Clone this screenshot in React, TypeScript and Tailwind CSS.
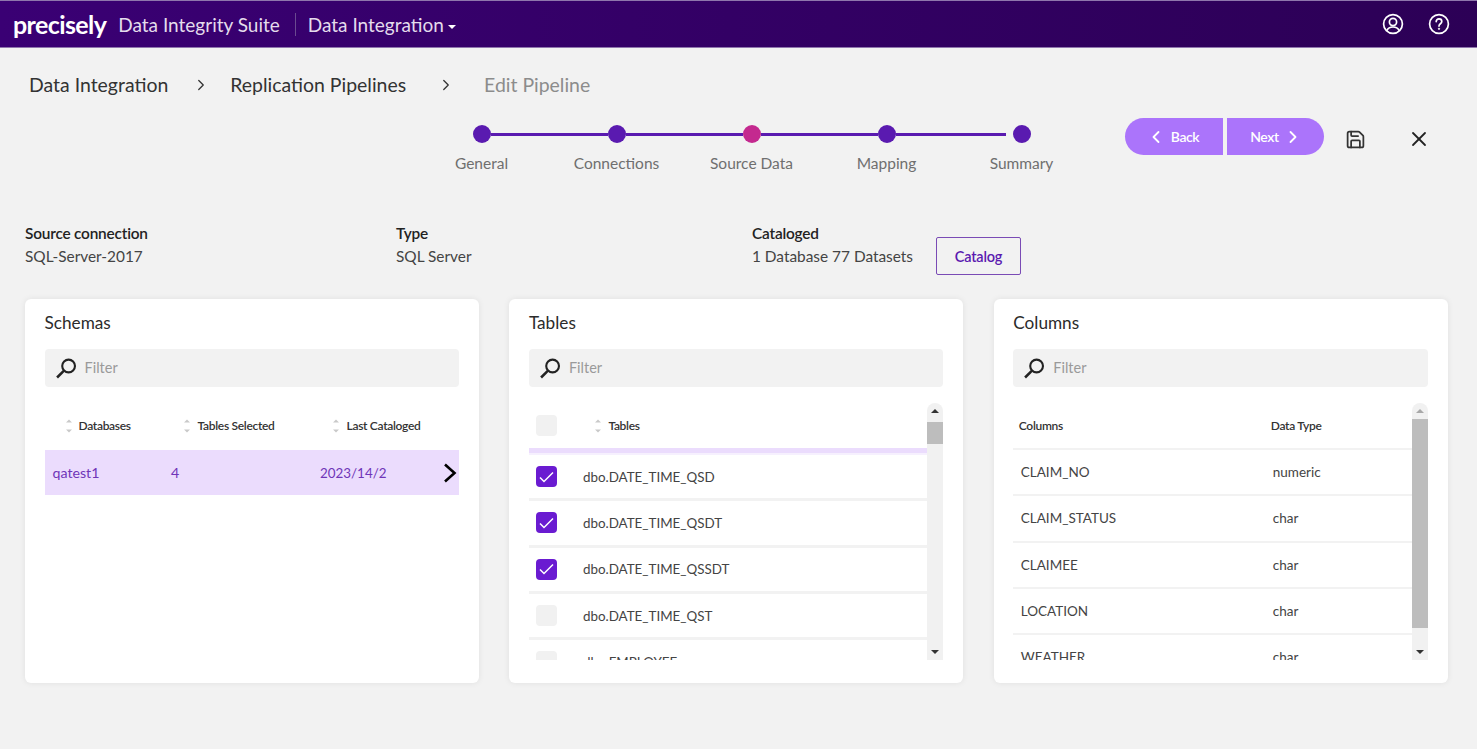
import { ChevronLeft, ChevronRight, Save, X } from 'lucide-react';

const steps = ['General', 'Connections', 'Source Data', 'Mapping', 'Summary'];

const tables = [
  { name: 'dbo.DATE_TIME_QSD', checked: true },
  { name: 'dbo.DATE_TIME_QSDT', checked: true },
  { name: 'dbo.DATE_TIME_QSSDT', checked: true },
  { name: 'dbo.DATE_TIME_QST', checked: false },
  { name: 'dbo.EMPLOYEE', checked: false },
];

const columns = [
  ['CLAIM_NO', 'numeric'],
  ['CLAIM_STATUS', 'char'],
  ['CLAIMEE', 'char'],
  ['LOCATION', 'char'],
  ['WEATHER', 'char'],
];

function UserIcon() {
  return (
    <svg width="22" height="22" viewBox="0 0 22 22" fill="none" stroke="white" strokeWidth="1.7">
      <circle cx="11" cy="11" r="9.4" />
      <circle cx="11" cy="9" r="3.6" />
      <path d="M4.8 17.6c1.2-2.6 3.4-3.6 6.2-3.6s5 1 6.2 3.6" />
    </svg>
  );
}

function HelpIcon() {
  return (
    <svg width="22" height="22" viewBox="0 0 22 22" fill="none" stroke="white" strokeWidth="1.7">
      <circle cx="11" cy="11" r="9.4" />
      <path d="M8.2 8.6c0-1.7 1.2-2.7 2.8-2.7s2.8 1 2.8 2.5c0 2.4-2.8 2.3-2.8 4.7" strokeLinecap="round" />
      <circle cx="11" cy="15.8" r="0.7" fill="white" strokeWidth="0.8" />
    </svg>
  );
}

function SearchIcon() {
  return (
    <svg width="23" height="23" viewBox="0 0 22 22" fill="none" stroke="#222" className="shrink-0">
      <circle cx="13" cy="8.6" r="6.1" strokeWidth="2" />
      <path d="M8.6 13 2 19.6" strokeWidth="2.4" />
    </svg>
  );
}

function SortIcon() {
  return (
    <svg width="6" height="14" viewBox="0 0 6 14" fill="#c9c9c9" className="shrink-0">
      <path d="M3 0.5 6 3.5H0Z" />
      <path d="M3 13.5 0 10.5H6Z" />
    </svg>
  );
}

function Filter() {
  return (
    <div className="mt-[14px] flex h-[38px] items-center gap-[7px] rounded bg-[#f2f2f2] pl-[10px]">
      <SearchIcon />
      <span className="text-[14.5px] text-[#9a9a9a]">Filter</span>
    </div>
  );
}

function Scrollbar({ thumbTop, thumbHeight, dark }: { thumbTop: string; thumbHeight: string; dark: boolean }) {
  return (
    <div className="flex w-4 shrink-0 flex-col items-center rounded-t-lg bg-[#f1f1f1]">
      <div className="flex h-[16px] shrink-0 items-center justify-center">
        <div className={`h-0 w-0 border-x-[4px] border-b-[4px] border-x-transparent ${dark ? 'border-b-[#333]' : 'border-b-[#a8a8a8]'}`} />
      </div>
      <div className={`w-full flex-1 ${thumbTop}`}>
        <div className={`w-full bg-[#bdbdbd] ${thumbHeight}`} />
      </div>
      <div className="flex h-[16px] shrink-0 items-center justify-center">
        <div className="h-0 w-0 border-x-[4px] border-t-[4px] border-x-transparent border-t-[#333]" />
      </div>
    </div>
  );
}

function Card({ title, children }: { title: string; children: React.ReactNode }) {
  return (
    <section className="h-[384px] w-[454px] rounded-md bg-white pl-[19.5px] pr-[20px] pt-[12px] shadow-[0_0_6px_rgba(0,0,0,0.08)]">
      <h2 className="text-[17.2px] leading-[24px] text-[#2b2b2b]">{title}</h2>
      <Filter />
      {children}
    </section>
  );
}

function Checkbox({ checked }: { checked: boolean }) {
  if (checked) {
    return (
      <div className="flex h-[21px] w-[21px] shrink-0 items-center justify-center rounded-[4px] bg-[#6a1bd1]">
        <svg width="15" height="12" viewBox="0 0 15 12" fill="none" stroke="white" strokeWidth="1.5">
          <path d="M1 6.5 5 10.5 14 1.5" />
        </svg>
      </div>
    );
  }
  return <div className="h-[21px] w-[21px] shrink-0 rounded-[4px] bg-[#f1f1f1]" />;
}

export default function App() {
  return (
    <div className="h-[749px] w-[1477px] overflow-hidden bg-[#f2f2f2] font-['Lato',sans-serif]">
      <header className="flex h-[48px] items-center justify-between border-y border-[#8f76ad] bg-gradient-to-r from-[#3a0074] to-[#2c0056] pl-[13px] pr-[27px]">
        <div className="flex items-center">
          <span className="text-[25px] font-bold leading-none tracking-[-0.6px] text-white">precisely</span>
          <span className="ml-[12px] mt-[2px] text-[19px] text-[#e4dcec]">Data Integrity Suite</span>
          <div className="ml-[15px] h-[23px] w-px bg-[#6a4a90]" />
          <span className="ml-[12px] mt-[2px] text-[19px] text-[#e4dcec]">Data Integration</span>
          <div className="ml-[4px] mt-[5px] h-0 w-0 border-x-[4px] border-t-[4px] border-x-transparent border-t-white" />
        </div>
        <div className="flex items-center gap-[24.5px]">
          <UserIcon />
          <HelpIcon />
        </div>
      </header>

      <nav className="flex h-[75px] items-center pb-[2px] pl-[29px] text-[19.45px] text-[#333]">
        <span>Data Integration</span>
        <ChevronRight size={18} strokeWidth={1.7} className="ml-[24px] text-[#333]" />
        <span className="ml-[20px]">Replication Pipelines</span>
        <ChevronRight size={18} strokeWidth={1.7} className="ml-[31px] text-[#333]" />
        <span className="ml-[29px] text-[#8c8c8c]">Edit Pipeline</span>
      </nav>

      <div className="flex h-[99px] items-start">
        <div className="ml-[414px] w-[675px]">
          <div className="mt-[2px] flex h-[18px] items-center px-[58.5px]">
            {steps.map((step, i) => (
              <div key={step} className={i < 4 ? 'flex flex-1 items-center' : 'flex items-center'}>
                <div className={`h-[18px] w-[18px] shrink-0 rounded-full ${i === 2 ? 'bg-[#c4298f]' : 'bg-[#5a1ab0]'}`} />
                {i < 4 && <div className={`h-[3px] flex-1 bg-[#5a1ab0] ${i === 3 ? 'mr-[7px]' : ''}`} />}
              </div>
            ))}
          </div>
          <div className="mt-[10px] grid grid-cols-5 text-center text-[15.5px] leading-[20px] text-[#6f6f6f]">
            {steps.map((step) => (
              <span key={step}>{step}</span>
            ))}
          </div>
        </div>
        <div className="ml-[36px] -mt-[5px] flex items-center">
          <button className="flex h-[37px] w-[98px] items-center justify-center gap-[5px] rounded-l-full bg-[#ab74fb] pr-[3px] text-[14px] font-semibold tracking-[-0.4px] text-white">
            <ChevronLeft size={20} strokeWidth={2.2} />
            Back
          </button>
          <button className="ml-[4px] flex h-[37px] w-[97px] items-center justify-center gap-[4px] rounded-r-full bg-[#ab74fb] pl-[2px] text-[14px] font-semibold tracking-[-0.4px] text-white">
            Next
            <ChevronRight size={20} strokeWidth={2.2} />
          </button>
          <Save size={21} strokeWidth={2} className="ml-[21px] mt-[5px] text-[#333]" />
          <X size={24} strokeWidth={1.8} className="ml-[41px] mt-[5px] text-[#222]" />
        </div>
      </div>

      <div className="flex h-[77px] items-start pl-[25px] text-[15.4px] leading-[23px]">
        <div className="w-[371px]">
          <div className="font-semibold tracking-[-0.2px] text-[#222]">Source connection</div>
          <div className="text-[#444]">SQL-Server-2017</div>
        </div>
        <div className="w-[356px]">
          <div className="font-semibold tracking-[-0.2px] text-[#222]">Type</div>
          <div className="text-[#444]">SQL Server</div>
        </div>
        <div className="w-[184px]">
          <div className="font-semibold tracking-[-0.2px] text-[#222]">Cataloged</div>
          <div className="text-[#444]">1 Database 77 Datasets</div>
        </div>
        <button className="mt-[15px] h-[38px] w-[85px] rounded-[2px] border border-[#7a4bb5] text-[14.5px] font-semibold tracking-[-0.2px] text-[#5a1ab0]">
          Catalog
        </button>
      </div>

      <div className="flex gap-[30.4px] pl-[25px]">
        <Card title="Schemas">
          <div className="mt-[16px] flex h-[45px] items-center text-[12px] font-semibold tracking-[-0.3px] text-[#333]">
            <div className="ml-[21px] flex w-[118px] items-center gap-[7px]">
              <SortIcon />
              Databases
            </div>
            <div className="flex w-[149px] items-center gap-[8px]">
              <SortIcon />
              Tables Selected
            </div>
            <div className="flex items-center gap-[8px]">
              <SortIcon />
              Last Cataloged
            </div>
          </div>
          <div className="mt-[2px] flex h-[45px] items-center bg-[#ebdcfd] pt-px text-[14.2px] text-[#6f35b8]">
            <span className="ml-[8px] w-[118.5px] shrink-0">qatest1</span>
            <span className="w-[149px] shrink-0">4</span>
            <span className="w-[123px] shrink-0 text-[13.4px]">2023/14/2</span>
            <svg width="14" height="20" viewBox="0 0 14 20" fill="none" stroke="black" strokeWidth="2.6" className="shrink-0">
              <path d="M2 1.5 11.5 10 2 18.5" />
            </svg>
          </div>
        </Card>

        <Card title="Tables">
          <div className="mt-[16px] flex h-[257px]">
            <div className="flex-1 overflow-hidden">
              <div className="flex h-[45px] items-center text-[12px] font-semibold tracking-[-0.3px] text-[#333]">
                <div className="ml-[7.5px]">
                  <Checkbox checked={false} />
                </div>
                <div className="ml-[38px] flex items-center gap-[7px]">
                  <SortIcon />
                  Tables
                </div>
              </div>
              <div className="h-[7px] border-b-[2px] border-[#f6f0fe] bg-[#ebdcfd]" />
              {tables.map((t) => (
                <div key={t.name} className="flex h-[46.33px] shrink-0 items-center border-b-[3px] border-[#f2f2f2] text-[13.4px] text-[#444]">
                  <div className="ml-[7.5px]">
                    <Checkbox checked={t.checked} />
                  </div>
                  <span className="ml-[25.5px]">{t.name}</span>
                </div>
              ))}
            </div>
            <Scrollbar thumbTop="pt-[3px]" thumbHeight="h-[22px]" dark={true} />
          </div>
        </Card>

        <Card title="Columns">
          <div className="mt-[16px] flex h-[257px]">
            <div className="flex-1 overflow-hidden">
              <div className="flex h-[47px] items-center border-b-[2px] border-[#f2f2f2] text-[12px] font-semibold tracking-[-0.3px] text-[#333]">
                <span className="ml-[5.5px] w-[252px]">Columns</span>
                <span>Data Type</span>
              </div>
              {columns.map(([name, type]) => (
                <div key={name} className="flex h-[46.33px] items-center border-b-[2px] border-[#f2f2f2] text-[13.5px] text-[#444]">
                  <span className="ml-[7.5px] w-[252px]">{name}</span>
                  <span>{type}</span>
                </div>
              ))}
            </div>
            <Scrollbar thumbTop="pt-0" thumbHeight="h-[209px]" dark={false} />
          </div>
        </Card>
      </div>
    </div>
  );
}
